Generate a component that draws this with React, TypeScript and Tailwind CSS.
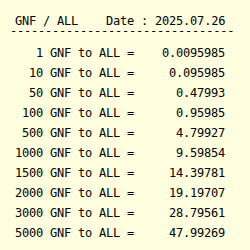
import React from 'react';

const rates: [string, string][] = [
  ['1', '0.0095985'],
  ['10', '0.095985'],
  ['50', '0.47993'],
  ['100', '0.95985'],
  ['500', '4.79927'],
  ['1000', '9.59854'],
  ['1500', '14.39781'],
  ['2000', '19.19707'],
  ['3000', '28.79561'],
  ['5000', '47.99269'],
];

export default function App() {
  return (
    <div className="w-[250px] h-[250px] bg-[#ffffe0] text-[#000] text-[12px] tracking-[-0.22px] font-['DejaVu_Sans_Mono',monospace] pt-[14px] pl-[8px] whitespace-pre overflow-hidden">
      <div className="leading-[14px]">{' GNF / ALL    Date : 2025.07.26'}</div>
      <div className="leading-[6px] pl-[2px]">{'-'.repeat(32)}</div>

      <div className="mt-[9px] flex flex-col">
        {rates.map(([amount, value]) => (
          <div key={amount} className="flex leading-[20px]">
            <span className="w-[35px] text-right">{amount}</span>
            <span>{' GNF to ALL ='}</span>
            <span className="w-[91px] text-right">{value}</span>
          </div>
        ))}
      </div>
    </div>
  );
}
